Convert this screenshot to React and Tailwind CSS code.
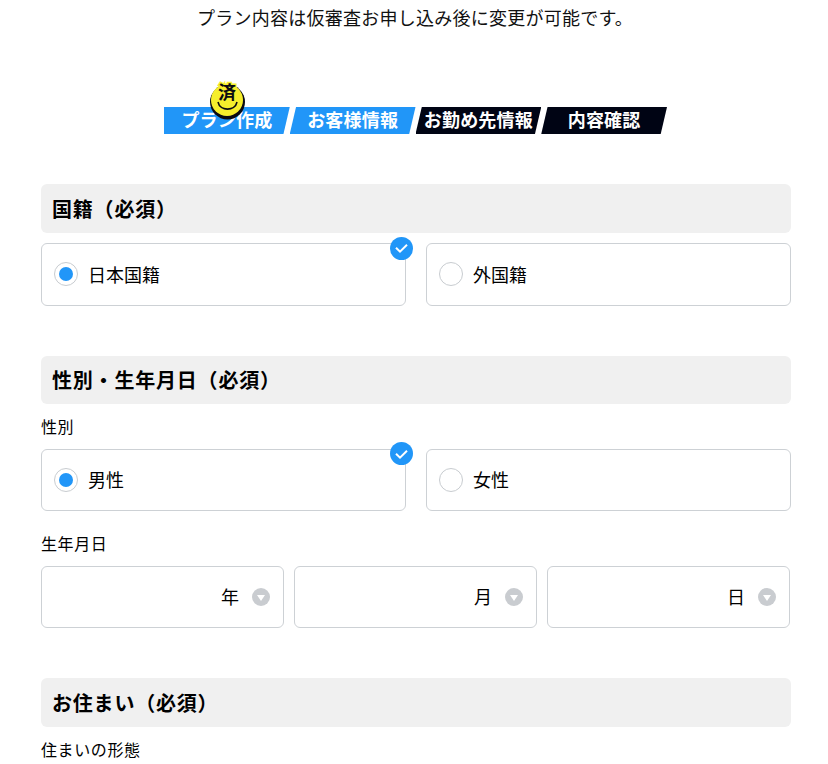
import React from 'react';

const steps = [
  { label: 'プラン作成', done: true },
  { label: 'お客様情報', done: true },
  { label: 'お勤め先情報', done: false },
  { label: '内容確認', done: false },
];

const DoneBadge = () => (
  <div className="absolute left-[45px] top-[-26px] w-[38px] h-[40px]">
    <svg width="38" height="40" viewBox="0 0 38 40">
      <circle cx="18.5" cy="21" r="17.5" fill="#0b0b12" />
      <circle cx="18" cy="19" r="16" fill="#f6ee2c" />
      <path d="M9 21 C11 30.5 26 30.5 28 21" fill="none" stroke="#0b0b12" strokeWidth="1.6" />
    </svg>
    <span className="absolute left-[9px] top-[-2px] text-[18px] leading-[24px] font-bold text-[#0b0b12] [-webkit-text-stroke:3px_#f6ee2c] [paint-order:stroke_fill]">
      済
    </span>
  </div>
);

const Step = ({ label, done, first }) => (
  <div className="relative w-[125.75px] h-[27px] flex items-center justify-center">
    <div
      className={`absolute inset-0 ${done ? 'bg-[#2196f8]' : 'bg-[#000414]'} ${first ? '[clip-path:polygon(0_0,100%_0,95%_100%,0_100%)]' : '[clip-path:polygon(5%_0,100%_0,95%_100%,0_100%)]'}`}
    />
    <span className="relative -top-[2px] text-white font-bold text-[18px] leading-none tracking-[0.2px]">{label}</span>
    {first && <DoneBadge />}
  </div>
);

const SectionTitle = ({ children }) => (
  <div className="h-[48.6px] rounded-md bg-[#f0f0f0] flex items-center pl-[11px] pt-[1px] text-[20px] tracking-[0.8px] font-bold text-black">
    {children}
  </div>
);

const Label = ({ children, className }) => (
  <div className={`h-[24px] text-[16px] leading-[22px] tracking-[0.6px] ${className}`}>{children}</div>
);

const Radio = ({ label, checked }) => (
  <div className="relative flex-1 h-[62.6px] rounded-md border border-[#cdd1d5] bg-white flex items-center pl-3">
    <span className="w-6 h-6 rounded-full border border-[#c8ccd0] flex items-center justify-center">
      {checked && <span className="w-[14px] h-[14px] rounded-full bg-[#2196f8]" />}
    </span>
    <span className="ml-[10px] text-[18px] text-black">{label}</span>
    {checked && (
      <span className="absolute right-[-8px] top-[-7.2px] w-[23px] h-[23px] rounded-full bg-[#2196f8] flex items-center justify-center">
        <svg width="13" height="10" viewBox="0 0 13 10">
          <path d="M1 4.8 L5 8.6 L12 1.8" fill="none" stroke="#fff" strokeWidth="2" />
        </svg>
      </span>
    )}
  </div>
);

const DateSelect = ({ unit }) => (
  <div className="flex-1 h-[62.6px] rounded-md border border-[#cdd1d5] bg-white flex items-center justify-end pr-[13px]">
    <span className="text-[18px] leading-[24px] text-black mr-[13px] -mt-[2px]">{unit}</span>
    <span className="w-[18px] h-[18px] rounded-full bg-[#c9ccd0] flex items-center justify-center">
      <span className="w-0 h-0 border-x-[4px] border-x-transparent border-t-[6px] border-t-white mt-[1px]" />
    </span>
  </div>
);

export default function App() {
  return (
    <div className="h-[764px] overflow-hidden bg-white font-['Noto_Sans_CJK_JP',sans-serif] text-black pl-[41px] pr-[37px]">
      <p className="pt-[5px] h-[24px] pr-[2px] text-center text-[18px] leading-[24px] tracking-[0.25px] text-[#111]">
        プラン内容は仮審査お申し込み後に変更が可能です。
      </p>

      <div className="mt-[83px] ml-[123px] flex">
        {steps.map((s, i) => (
          <Step key={s.label} label={s.label} done={s.done} first={i === 0} />
        ))}
      </div>

      <section className="mt-[50px]">
        <SectionTitle>国籍（必須）</SectionTitle>
        <div className="mt-[10.4px] flex gap-5">
          <Radio label="日本国籍" checked />
          <Radio label="外国籍" />
        </div>
      </section>

      <section className="mt-[50px]">
        <SectionTitle>性別・生年月日（必須）</SectionTitle>
        <Label className="mt-[10.4px]">性別</Label>
        <div className="mt-[10px] flex gap-5">
          <Radio label="男性" checked />
          <Radio label="女性" />
        </div>
        <Label className="mt-[20.6px]">生年月日</Label>
        <div className="mt-[10px] flex gap-[10px] pr-[1px]">
          <DateSelect unit="年" />
          <DateSelect unit="月" />
          <DateSelect unit="日" />
        </div>
      </section>

      <section className="mt-[50px]">
        <SectionTitle>お住まい（必須）</SectionTitle>
        <Label className="mt-[10.8px]">住まいの形態</Label>
      </section>
    </div>
  );
}
